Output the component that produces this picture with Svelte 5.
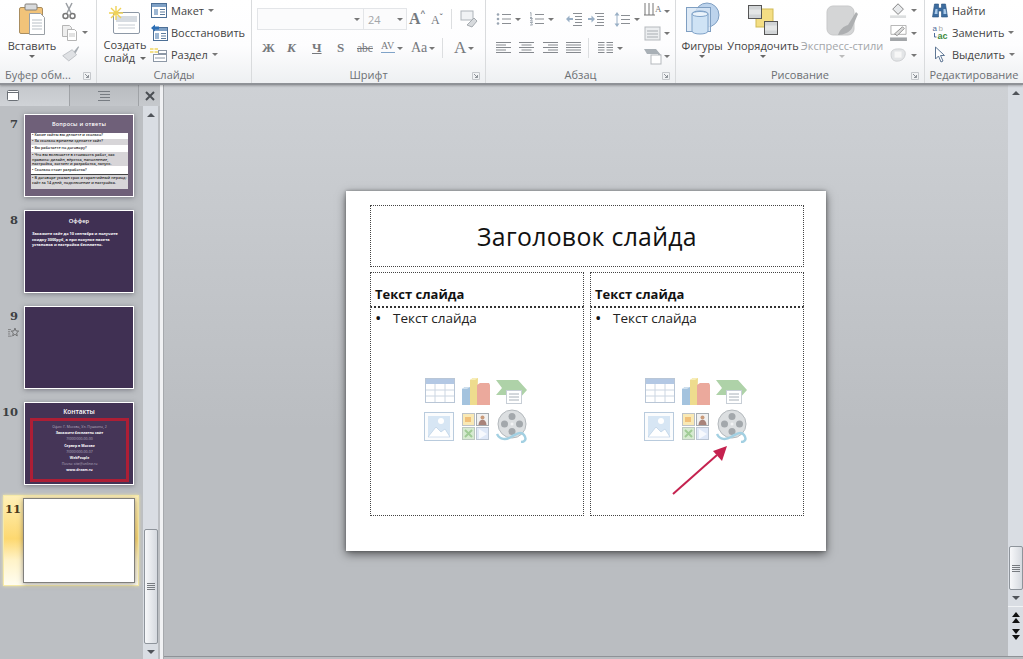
<script>
  const rows7 = [
    { t: 'Какие сайты вы делаете и сколько?', c: 'h6' },
    { t: 'За сколько времени сделаете сайт?', c: 'h6 alt' },
    { t: 'Вы работаете по договору?', c: 'h7' },
    { t: 'Что вы включаете в стоимость работ, как правило: дизайн, вёрстка, наполнение, настройка, хостинг и разработка, запуск.', c: 'h14 alt' },
    { t: 'Сколько стоит разработка?', c: 'h9 line' },
    { t: 'В договоре указан срок и гарантийный период: сайт за 14 дней, подключение и настройка.', c: 'h13 alt' }
  ];
</script>

{#snippet caret(cls = '')}<i class="caret {cls}"></i>{/snippet}
{#snippet launcher()}<svg class="launch" width="8" height="8" viewBox="0 0 8 8"><path d="M.5.5h7v7h-7z" fill="none" stroke="#c5c8cc"/><path d="M2 2l3.500 3.500M5.500 3v2.500H3" fill="none" stroke="#8d9298"/></svg>{/snippet}
{#snippet listIcon(kind)}
  <svg width="15" height="14" viewBox="0 0 15 14">
    {#if kind === 'bullet'}
      <path d="M6 2.500h9M6 7h9M6 11.500h9" stroke="#8b8f94"/>
      <circle cx="2" cy="2.500" r="1.300" fill="#9aa5b2"/><circle cx="2" cy="7" r="1.300" fill="#9aa5b2"/><circle cx="2" cy="11.500" r="1.300" fill="#9aa5b2"/>
    {:else}
      <path d="M6 2.500h9M6 7h9M6 11.500h9" stroke="#8b8f94"/>
      <path d="M1 1l1-.5v4M1 5.500h2M1 6.500h2.500l-2 2.500h2.500M1 10.500h2.500l-1 1.200 1 1.300H1" fill="none" stroke="#8a94a0" stroke-width=".8"/>
    {/if}
  </svg>
{/snippet}
{#snippet indentIcon(dir)}
  <svg width="16" height="14" viewBox="0 0 16 14">
    <path d="M7 1.500h9M9 4.500h7M9 7.500h7M9 10.500h7M7 13.500h9" stroke="#8b8f94"/>
    {#if dir === 'l'}<path d="M0 7l3.500-3.500V6H7v2H3.500v2.500z" fill="#9ab0c6"/>{:else}<path d="M7 7L3.500 3.500V6H0v2h3.500v2.500z" fill="#9ab0c6"/>{/if}
  </svg>
{/snippet}
{#snippet spacingIcon()}
  <svg width="16" height="15" viewBox="0 0 16 15">
    <path d="M7 3.500h9M7 7.500h9M7 11.500h9" stroke="#8b8f94"/>
    <path d="M3 0l2.500 3.500h-5zM3 15l2.500-3.500h-5z" fill="#9ab0c6"/><path d="M3 3v9" stroke="#9ab0c6"/>
  </svg>
{/snippet}
{#snippet alignIcon(mode)}
  <svg width="15" height="12" viewBox="0 0 15 12">
    {#each [0, 1, 2, 3, 4] as i}
      {@const long = i % 2 === 0 || mode === 'j'}
      {@const w = long ? 15 : 10}
      {@const x = mode === 'c' ? (15 - w) / 2 : mode === 'r' ? 15 - w : 0}
      <rect x={x} y={i * 2.500} width={w} height="1" fill="#85898e"/>
    {/each}
  </svg>
{/snippet}
{#snippet colsIcon()}
  <svg width="15" height="12" viewBox="0 0 15 12">
    {#each [0, 1, 2, 3, 4] as i}<rect x="0" y={i * 2.500} width="6.500" height="1" fill="#85898e"/><rect x="8.500" y={i * 2.500} width="6.500" height="1" fill="#85898e"/>{/each}
  </svg>
{/snippet}

{#snippet contentIcons()}
  <svg class="cicons" width="104" height="66" viewBox="0 0 104 66">
    <rect x="1.500" y="1.500" width="29" height="24" fill="#fff" stroke="#b9c6d6"/><rect x="2" y="2" width="28" height="5" fill="#b3c8e4"/>
    <path d="M11 7v18M21 7v18M2 13h28M2 19h28" stroke="#ccd6e2"/>
    <path d="M38 12l3-2h5v18h-8z" fill="#a4c3de"/><path d="M46 3l3-2h5l-1 27h-7z" fill="#eedc8e"/><path d="M46 3h5l3-2h-5z" fill="#f7edb8"/><path d="M53 8l3-2h9l1 2v20H53z" fill="#eba99c"/><path d="M38 12h5l3-2h-5z" fill="#cfe0ee"/>
    <path d="M72 3h22l9 10-8 9H85v-4H72l6-7z" fill="#aed2a8"/><rect x="82.500" y="13.500" width="15" height="13" fill="#fff" stroke="#c7ced6"/><path d="M85 17h10M85 20h10M85 23h10" stroke="#a8b0b8"/>
    <rect x=".5" y="35.500" width="29" height="28" fill="#fbfcfd" stroke="#b9cbdd"/><rect x="4" y="39" width="22" height="21" fill="#d7e6f4"/><path d="M4 60l8-10 5 5 4-3 5 8z" fill="#fff" stroke="#a9c3dc" stroke-width=".5"/><circle cx="17" cy="44" r="3" fill="#fff"/>
    <rect x="38.500" y="36.500" width="12" height="12" fill="#f9e9b5" stroke="#bcc2c8"/><rect x="41" y="40" width="6" height="5" fill="#f1c07a"/>
    <rect x="52.500" y="36.500" width="12" height="12" fill="#f0f0f0" stroke="#a5abb0"/><circle cx="58.500" cy="40.500" r="2" fill="#c99a7a"/><path d="M54.500 48c0-7 8-7 8 0z" fill="#a8837a"/>
    <rect x="38.500" y="50.500" width="12" height="12" fill="#d6ead1" stroke="#bcc8c0"/><path d="M41 53l7 7M48 53l-7 7" stroke="#a0cc96" stroke-width="2"/>
    <rect x="52.500" y="50.500" width="12" height="12" fill="#dfe8f7" stroke="#bcc6d4"/><path d="M55 52l8 5-8 5z" fill="#f7f9fd"/>
    <circle cx="88" cy="47" r="14" fill="#dcdfe1" stroke="#b4b9bd"/><circle cx="88" cy="39.500" r="3.500" fill="#a3a8ac"/><circle cx="80.500" cy="47" r="3.500" fill="#a3a8ac"/><circle cx="95.500" cy="47" r="3.500" fill="#a3a8ac"/><circle cx="88" cy="54.500" r="3.500" fill="#a3a8ac"/><circle cx="88" cy="47" r="1.500" fill="#f2f3f4"/>
    <path d="M73 57c3 6 9 6 14 3s10-6 13-2 1 7-3 7" fill="none" stroke="#a3d0e2" stroke-width="2.500"/>
  </svg>
{/snippet}

<div class="app">
  <header class="ribbon">
    <section class="group g1">
      <div class="content">
        <div class="big w64">
          <svg width="30" height="34" viewBox="0 0 30 34"><rect x="2.500" y="5.500" width="23" height="26" rx="1.500" fill="#f2c379" stroke="#a98d5f"/><rect x="8" y="2" width="12" height="6" rx="1" fill="#d8dadc" stroke="#84807a"/><path d="M12.500 11.500h11l4 4v17h-15z" fill="#fff" stroke="#9aa0a6"/><path d="M15 18h10M15 21h10M15 24h10M15 27h10" stroke="#b8bfc6"/></svg>
          <span class="t">Вставить</span>
          {@render caret()}
        </div>
        <div class="smallcol">
          <svg width="16" height="18" viewBox="0 0 16 18"><path d="M5 1l5 10M11 1L6 11" stroke="#9b9fa4" stroke-width="1.500"/><circle cx="4.500" cy="14" r="2.500" fill="none" stroke="#777" stroke-width="1.500"/><circle cx="11.500" cy="14" r="2.500" fill="none" stroke="#777" stroke-width="1.500"/></svg>
          <div class="row"><svg width="17" height="17" viewBox="0 0 17 17"><path d="M1.500 1.500h7l2 2v9h-9z" fill="#eee" stroke="#b5b5b5"/><path d="M6.500 5.500h7l2 2v9h-9z" fill="#fff" stroke="#b5b5b5"/><path d="M8 10h6M8 12h6" stroke="#c5c5c5"/></svg>{@render caret('mini')}</div>
          <svg width="19" height="18" viewBox="0 0 22 20"><path d="M2 12L13 5l5 6-9 7z" fill="#dfe1e4" stroke="#b8bcc0"/><path d="M15 7l5-6 1 1-4 7z" fill="#a6acb2"/></svg>
        </div>
      </div>
      <footer class="label"><span class="lab-name left">Буфер обм...</span>{@render launcher()}</footer>
    </section>

    <section class="group g2">
      <div class="content">
        <div class="big w62">
          <svg width="32" height="30" viewBox="0 0 32 30"><rect x="4.500" y="7.500" width="26" height="21" rx="1.500" fill="#fff" stroke="#8d98a6"/><rect x="7" y="11" width="21" height="6" fill="#d7dce2"/><path d="M9 20h17M9 23h17" stroke="#c6ccd3"/><path d="M7 1v14M0 8h14M2 3l10 10M12 3L2 13" stroke="#f0d256" stroke-width="1.400"/></svg>
          <span class="t two">Создать</span>
          <span class="t two">слайд {@render caret('inl')}</span>
        </div>
        <div class="listcol lc2">
          <div class="li"><svg width="18" height="15" viewBox="-1 0 18 15"><rect x=".5" y=".5" width="15" height="14" fill="#fff" stroke="#4c6f96"/><rect x="1" y="1" width="14" height="3" fill="#7fa1c6"/><rect x="3" y="6" width="4" height="6" fill="#9db7d3"/><path d="M9 6.500h5M9 9h5M9 11.500h5" stroke="#5d7c9e"/></svg><span>Макет</span>{@render caret('mini')}</div>
          <div class="li"><svg width="18" height="17" viewBox="0 0 18 17"><rect x="3.500" y="3.500" width="14" height="13" fill="#fff" stroke="#4c6f96"/><rect x="4" y="4" width="13" height="3" fill="#7fa1c6"/><rect x="5" y="9" width="4" height="6" fill="#9db7d3"/><path d="M11 9.500h5M11 12h5M11 14.500h5" stroke="#5d7c9e"/><path d="M1 4l4-3.500v2h4v3H5v2z" fill="#2d6fb5"/></svg><span>Восстановить</span></div>
          <div class="li"><svg width="18" height="17" viewBox="0 0 18 17"><path d="M0 2h8v5H0z" fill="#f3e08a"/><path d="M0 4.500h8M4 1v7" stroke="#fff"/><rect x="3.500" y="8.500" width="13" height="7" fill="#fff" stroke="#8d98a6"/><path d="M5 12h10" stroke="#8d98a6"/><rect x="8.500" y="4.500" width="8" height="3" fill="#fff" stroke="#8d98a6"/></svg><span>Раздел</span>{@render caret('mini')}</div>
        </div>
      </div>
      <footer class="label"><span class="lab-name">Слайды</span></footer>
    </section>

    <section class="group g3">
      <div class="content fontc">
        <div class="row r1">
          <div class="combo"><div class="cf">{@render caret('mini')}</div><div class="cs"><span>24</span>{@render caret('mini')}</div></div>
          <span class="aa big-a">A<sup>^</sup></span>
          <span class="aa small-a">A<sup>ˇ</sup></span>
          <i class="sep"></i>
          <svg width="18" height="18" viewBox="0 0 18 18"><rect x="1" y="1" width="12" height="9" fill="#f0f2f4" stroke="#aeb4ba"/><path d="M7 15l7-7 3 3-5 6z" fill="#d7dadd" stroke="#a6abb0"/></svg>
        </div>
        <div class="row r2">
          <b class="fb">Ж</b><b class="fb it">К</b><b class="fb un">Ч</b><b class="fb fs">S</b>
          <span class="fb strike">abc</span>
          <span class="fb av">AV<i class="dbl"></i></span>{@render caret('mini')}
          <span class="fb aac">Aa</span>{@render caret('mini')}
          <i class="sep s2"></i>
          <span class="fb ca">A</span>{@render caret('mini')}
        </div>
      </div>
      <footer class="label"><span class="lab-name">Шрифт</span>{@render launcher()}</footer>
    </section>

    <section class="group g4">
      <div class="content parac">
        <div class="paral">
          <div class="row pr1">
            <div class="row c33">{@render listIcon('bullet')}{@render caret('mini')}</div>
            <div class="row c37">{@render listIcon('num')}{@render caret('mini')}</div>
            <div class="row c22">{@render indentIcon('l')}</div>
            <div class="row c26">{@render indentIcon('r')}</div>
            <div class="row">{@render spacingIcon()}{@render caret('mini')}</div>
          </div>
          <div class="row pr2">
            <div class="c23">{@render alignIcon('l')}</div>
            <div class="c24">{@render alignIcon('c')}</div>
            <div class="c23">{@render alignIcon('r')}</div>
            <div class="c22">{@render alignIcon('j')}</div>
            <i class="sep s3"></i>
            {@render colsIcon()}{@render caret('mini')}
          </div>
        </div>
        <div class="parar">
          <div class="row"><svg width="18" height="16" viewBox="0 0 18 16"><path d="M1 0v12M5 0v12M9 0v12M-1 12h4M3 12h4M7 12h4" stroke="#777"/><text x="11" y="9" font-size="9" font-family="Liberation Serif" fill="#777">A</text></svg>{@render caret('mini')}</div>
          <div class="row"><svg width="18" height="17" viewBox="0 0 18 17"><rect x="1" y="2" width="15" height="13" fill="#eceef0" stroke="#b5b9bd"/><path d="M3 6h11M3 9h11M3 12h11" stroke="#a8adb2"/></svg>{@render caret('mini')}</div>
          <div class="row"><svg width="18" height="17" viewBox="0 0 18 17"><path d="M0 1h12l5 6-3 3V6H3z" fill="#a9b0b6"/><rect x="7" y="7" width="10" height="9" fill="#fff" stroke="#b5b9bd"/></svg>{@render caret('mini')}</div>
        </div>
      </div>
      <footer class="label"><span class="lab-name">Абзац</span>{@render launcher()}</footer>
    </section>

    <section class="group g5">
      <div class="content">
        <div class="big w46">
          <svg width="36" height="34" viewBox="0 0 36 34"><circle cx="23" cy="13" r="12" fill="#bcd3ec" stroke="#7f9fc2"/><rect x="2.500" y="5.500" width="24" height="24" fill="#d6e5f4" fill-opacity=".8" stroke="#7f9fc2"/><path d="M8 12c0-4 16-4 16 0v17c0 4-16 4-16 0z" fill="#cfe3f5" stroke="#7fa2c8"/><ellipse cx="16" cy="12" rx="8" ry="2.500" fill="#eaf3fb" stroke="#7fa2c8"/></svg>
          <span class="t">Фигуры</span>
          {@render caret()}
        </div>
        <div class="big w78">
          <svg width="32" height="34" viewBox="0 0 32 34"><rect x="9" y="7" width="17" height="18" fill="#f4de84" stroke="#cfb955"/><rect x="1.500" y="3.500" width="13" height="13" fill="#d1d4d6" stroke="#555"/><rect x="17.500" y="19.500" width="13" height="13" fill="#d1d4d6" stroke="#555"/><path d="M2 10h12M18 26h12" stroke="#f2f2f2" stroke-width="5" opacity=".6"/></svg>
          <span class="t">Упорядочить</span>
          {@render caret()}
        </div>
        <div class="big w82 dim">
          <svg width="32" height="34" viewBox="0 0 32 34"><rect x="1" y="4" width="27" height="29" rx="6" fill="#d4d5d6" stroke="#c8c9ca"/><path d="M12 33c2-6 6-9 10-10l8-13 2 2-6 14c-2 4-8 7-14 7z" fill="#adafb1"/></svg>
          <span class="t">Экспресс-стили</span>
          {@render caret()}
        </div>
        <div class="smallcol sc5">
          <div class="row"><svg width="17" height="16" viewBox="0 0 19 18"><path d="M3 8l6-6 6 6-6 6z" fill="#e8eaec" stroke="#777"/><path d="M0 15h18v3H0z" fill="#dcdedf"/></svg>{@render caret('mini')}</div>
          <div class="row"><svg width="17" height="16" viewBox="0 0 19 18"><path d="M1 .5h17v10H1z" fill="#fff" stroke="#aaa"/><path d="M5 10L14 2l2 2-8 8z" fill="#ddd" stroke="#888"/><path d="M0 14h19v4H0z" fill="#a3a6a9"/></svg>{@render caret('mini')}</div>
          <div class="row"><svg width="17" height="14" viewBox="0 0 19 16"><path d="M1 7c0-5 4-6 9-6 6 0 8 3 7 7-1 5-5 7-9 7-5 0-7-3-7-8z" fill="#e3e5e7" stroke="#c9ccce"/><path d="M5 4h8v7H5z" fill="#f7f7f7"/></svg>{@render caret('mini')}</div>
        </div>
      </div>
      <footer class="label"><span class="lab-name">Рисование</span>{@render launcher()}</footer>
    </section>

    <section class="group g6">
      <div class="content">
        <div class="listcol lc6">
          <div class="li"><svg width="17" height="15" viewBox="0 0 17 15"><path d="M3 1h4v4h3V1h4l2 13h-6V8H7v6H1z" fill="#3d6da0" stroke="#29507c" stroke-width=".6"/><path d="M4 6h2v5H3zM12 6h2l1 5h-3z" fill="#a9c9e8"/></svg><span>Найти</span></div>
          <div class="li"><svg width="17" height="17" viewBox="0 0 17 17"><text x="1" y="7" font-size="8" font-family="Liberation Sans" fill="#4d6b9a">a</text><text x="7" y="7" font-size="8" font-family="Liberation Sans" fill="#aaa">b</text><text x="6" y="15" font-size="9" font-weight="700" font-family="Liberation Sans" fill="#3f8a3f">ac</text><path d="M3 9v4h2" fill="none" stroke="#4d6b9a"/></svg><span>Заменить</span>{@render caret('mini')}</div>
          <div class="li"><svg width="17" height="17" viewBox="0 0 17 17"><path d="M4 1v12l3-3 2.500 6 2-1-2.500-5.500h4z" fill="#fff" stroke="#5e7694"/></svg><span>Выделить</span>{@render caret('mini')}</div>
        </div>
      </div>
      <footer class="label"><span class="lab-name">Редактирование</span></footer>
    </section>
  </header>

  <div class="work">
    <aside class="side">
      <div class="tabs">
        <div class="tab t-a"><svg width="12" height="11" viewBox="0 0 12 11"><rect x=".5" y=".5" width="11" height="10" rx="1" fill="#fff" stroke="#6b7076"/><path d="M1 2.500h10" stroke="#6b7076"/></svg></div>
        <div class="tab t-b"><svg width="14" height="10" viewBox="0 0 14 10"><path d="M1 .5h12M3 3.500h10M3 6.500h10M1 9.500h12" stroke="#777c82"/></svg></div>
        <div class="tab t-c"><svg width="10" height="10" viewBox="0 0 10 10"><path d="M1 1l8 8M9 1L1 9" stroke="#4a4e53" stroke-width="2"/></svg></div>
      </div>
      <div class="sidebody">
        <div class="thumbs">
          <div class="item">
            <div class="num">7</div>
            <div class="thumb s7">
              <div class="th-title t7">Вопросы и ответы</div>
              <div class="rows7">
                {#each rows7 as r}<div class="r7 {r.c}">• {r.t}</div>{/each}
              </div>
            </div>
          </div>
          <div class="item">
            <div class="num">8</div>
            <div class="thumb dark">
              <div class="th-title t8">Оффер</div>
              <p class="p8">Закажите сайт до 10 сентября и получите скидку 3000руб, а при покупке пакета установка и настройка бесплатно.</p>
            </div>
          </div>
          <div class="item">
            <div class="num">9<svg class="star" width="11" height="11" viewBox="0 0 15 14"><path d="M0 3h4M0 6h3M0 9h3M0 12h5" stroke="#6a6a6a"/><path d="M9.500 1l1.400 3.800 3.600.3-2.700 2.500.8 4-3.100-2.100-3.100 2.100.8-4L4.500 5.100l3.600-.3z" fill="none" stroke="#555"/></svg></div>
            <div class="thumb dark"></div>
          </div>
          <div class="item">
            <div class="num">10</div>
            <div class="thumb dark s10">
              <div class="th-title t10">Контакты</div>
              <div class="redbox">
                <span>Офис: Г. Москва, Ул. Пушкина, 2</span>
                <span class="w">Закажите бесплатно сайт</span>
                <span>7(000)000-00-00</span>
                <span class="w">Сервер в Москве</span>
                <span>7(000)000-00-07</span>
                <span class="w">WebPeople</span>
                <span>Почта: site@online.ru</span>
                <span class="w">www.dream.ru</span>
              </div>
            </div>
          </div>
          <div class="item sel">
            <div class="num">11</div>
            <div class="thumb blank"></div>
          </div>
        </div>
        <div class="vscroll vs1">
          <div class="arr up"></div>
          <div class="spacer"></div>
          <div class="sthumb st1"><span class="grip"></span></div>
          <div class="arr down a15"></div>
        </div>
      </div>
    </aside>

    <main class="main">
      <div class="stage">
        <div class="slide">
          <div class="ph title">Заголовок слайда</div>
          <div class="cols">
            <div class="col">
              <div class="ph head">Текст слайда</div>
              <div class="ph body">
                <div class="bul"><span>•</span>Текст слайда</div>
                {@render contentIcons()}
              </div>
            </div>
            <div class="col">
              <div class="ph head">Текст слайда</div>
              <div class="ph body">
                <div class="bul"><span>•</span>Текст слайда</div>
                {@render contentIcons()}
                <svg class="arrow" width="60" height="56" viewBox="0 0 60 56"><path d="M2 54L46 15" stroke="#c5224f" stroke-width="2"/><path d="M56 6L42 11l9 10z" fill="#c5224f"/></svg>
              </div>
            </div>
          </div>
        </div>
      </div>
      <div class="vscroll vs2">
        <div class="arr up"></div>
        <div class="spacer"></div>
        <div class="sthumb st2"><span class="grip"></span></div>
        <div class="arr down"></div>
        <div class="pager">
          <div class="dblarr"><i class="tu"></i><i class="tu"></i></div>
          <div class="dblarr"><i class="td"></i><i class="td"></i></div>
        </div>
      </div>
    </main>
  </div>
</div>

<style>
  :global(body) { margin: 0; background: #bdc0c4; }
  .app { width: 1023px; height: 659px; overflow: hidden; display: flex; flex-direction: column; font-family: "Open Sans", "Noto Sans", sans-serif; color: #444; }
  .ribbon { height: 83px; flex: none; display: flex; background: linear-gradient(#fff 0%, #fdfdfe 55%, #eef0f2 100%); border-bottom: 2px solid #8f9297; box-shadow: 0 1px 2px rgba(0,0,0,.25); position: relative; z-index: 2; }
  .group { display: flex; flex-direction: column; border-right: 1px solid #d9dbdd; flex: none; box-sizing: border-box; }
  .g1 { width: 97px; } .g2 { width: 155px; } .g3 { width: 234px; } .g4 { width: 190px; } .g5 { width: 249px; } .g6 { width: 98px; border-right: 0; }
  .content { flex: 1; display: flex; min-height: 0; }
  .label { height: 16px; flex: none; display: flex; align-items: center; justify-content: center; position: relative; font-size: 11px; color: #6c6f73; line-height: 16px; }
  .lab-name.left { position: absolute; left: 5px; }
  .launch { position: absolute; right: 5px; top: 5px; }
  .row { display: flex; align-items: center; }
  .caret { display: inline-block; width: 0; height: 0; border: 3px solid transparent; border-top: 3.500px solid #666; border-bottom: 0; margin-top: 3px; }
  .caret.mini { margin: 0 0 0 4px; border-top-color: #777; }
  .caret.inl { margin: 0 0 2px 2px; vertical-align: middle; }
  .big { display: flex; flex-direction: column; align-items: center; flex: none; padding-top: 2px; font-size: 11px; line-height: 13px; }
  .big svg { height: 34px; flex: none; margin-bottom: 3px; }
  .big .t { white-space: nowrap; }
  .w64 { width: 64px; }
  .w62 { width: 56px; padding-top: 3px; }
  .w62 svg { margin-bottom: 1px; }
  .w46 { width: 52px; }
  .w78 { width: 70px; }
  .w82 { width: 88px; }
  .dim { color: #a3a6a9; }
  .dim .caret { border-top-color: #bbb; }
  .smallcol { display: flex; flex-direction: column; align-items: flex-start; gap: 4px; padding: 2px 0 0 0; margin-left: -3px; }
  .sc5 { gap: 7px; padding-top: 2px; margin-left: 4px; }
  .listcol { display: flex; flex-direction: column; gap: 5px; padding: 2px 0 0 0; }
  .lc2 { margin-left: -3px; }
  .li { display: flex; align-items: center; height: 17px; font-size: 11px; white-space: nowrap; }
  .li svg { width: 18px; flex: none; margin-right: 3px; }
  .lc6 { padding-left: 6px; }
  .fontc { flex-direction: column; padding: 8px 0 0 5px; gap: 8px; }
  .combo { display: flex; width: 150px; height: 22px; box-sizing: border-box; border: 1px solid #e3e5e8; background: #fbfbfc; flex: none; }
  .cf { width: 106px; display: flex; justify-content: flex-end; align-items: center; padding-right: 3px; border-right: 1px solid #e3e5e8; box-sizing: border-box; }
  .cs { flex: 1; display: flex; align-items: center; justify-content: space-between; padding: 0 3px 0 4px; font-size: 11px; color: #a3a6a9; }
  .aa { font-family: "Liberation Serif", serif; color: #757a7f; font-weight: 700; display: inline-flex; }
  .aa sup { font: 700 8px "Liberation Sans", sans-serif; margin-top: -1px; }
  .big-a { font-size: 16px; margin-left: 2px; width: 22px; }
  .small-a { font-size: 12px; font-weight: 400; width: 20px; padding-top: 2px; }
  .sep { display: block; width: 1px; height: 20px; background: #dcdee0; margin-right: 8px; flex: none; }
  .r2 { height: 20px; padding-left: 5px; }
  .r2 .caret.mini { margin-left: 2px; }
  .fb { font-family: "Liberation Serif", serif; font-weight: 700; font-style: normal; color: #76797d; font-size: 13px; width: 25px; flex: none; }
  .it { font-style: italic; } .un { text-decoration: underline; }
  .fs { width: 20px; }
  .strike { text-decoration: line-through; font-weight: 400; font-size: 11.500px; width: 24px; }
  .av { font-size: 10px; font-weight: 400; width: 14px; position: relative; line-height: 10px; margin-top: -4px; }
  .dbl { position: absolute; left: 0; top: 11px; width: 14px; height: 0; border-top: 1px solid #7fa3c8; }
  .aac { font-size: 14px; font-weight: 400; width: 16px; margin-left: 8px; }
  .ca { font-size: 17px; width: 12px; font-weight: 400; }
  .s2 { margin: 0 11px 0 7px; }
  .parac { padding: 3px 0 0 10px; }
  .paral { width: 148px; display: flex; flex-direction: column; gap: 13px; padding-top: 8px; flex: none; }
  .pr1 { height: 16px; }
  .c33 { width: 33px; } .c37 { width: 37px; } .c22 { width: 22px; } .c26 { width: 26px; }
  .c23 { width: 23px; } .c24 { width: 24px; }
  .pr2 { height: 16px; }
  .pr2 > div { display: flex; align-items: center; }
  .s3 { height: 20px; margin: 0 9px 0 0; }
  .parar { display: flex; flex-direction: column; gap: 6px; }
  .parar .caret.mini { margin-left: 2px; }
  .work { flex: 1; display: flex; min-height: 0; background: linear-gradient(#ced1d5, #babdc1 60%); }
  .side { width: 160px; flex: none; display: flex; flex-direction: column; border-right: 3px solid #f1f2f4; box-shadow: 1px 0 0 #a6a9ad; }
  .tabs { height: 21px; display: flex; flex: none; }
  .tab { display: flex; align-items: center; justify-content: center; box-sizing: border-box; }
  .t-a { width: 69px; background: linear-gradient(#c4c7cb, #d0d3d7); justify-content: flex-start; padding-left: 7px; }
  .t-b { width: 70px; background: linear-gradient(#b9bcc0, #c3c6ca); border-left: 1px solid #9fa2a6; border-right: 1px solid #9fa2a6; }
  .t-c { width: 21px; background: linear-gradient(#bcbfc3, #c6c9cd); }
  .sidebody { flex: 1; display: flex; min-height: 0; background: #bcbfc3; }
  .thumbs { width: 143px; flex: none; box-sizing: border-box; padding-top: 8px; display: flex; flex-direction: column; gap: 13px; }
  .item { display: flex; height: 83px; flex: none; }
  .num { width: 24px; flex: none; box-sizing: border-box; padding: 3px 6px 0 0; font: 700 11.500px/14px "DejaVu Serif", serif; color: #3d3f42; display: flex; flex-direction: column; align-items: flex-end; }
  .num .star { margin: 4px -1px 0 0; }
  .thumb { width: 110px; height: 83px; flex: none; box-sizing: border-box; border: 1px solid #fff; box-shadow: 0 1px 5px rgba(60,60,70,.5); overflow: hidden; color: #fff; text-align: center; position: relative; }
  .dark { background: #403053; }
  .s7 { background: #6f6079; }
  .th-title { font-size: 5.500px; line-height: 7px; padding-top: 6px; }
  .t7 { padding-top: 6px; font-weight: 600; letter-spacing: .2px; }
  .rows7 { margin: 5px 5px 0 6px; color: #222; font-size: 3.800px; line-height: 4.500px; text-align: left; font-weight: 600; }
  .r7 { background: #fff; padding-left: 1px; overflow: hidden; box-sizing: border-box; }
  .r7.alt { background: #d7d5d8; }
  .h6 { height: 6px; } .h7 { height: 7px; padding-top: 1px; } .h9 { height: 9px; padding-top: 2px; } .h13 { height: 14px; padding-top: 1px; } .h14 { height: 14px; padding-top: 1px; }
  .r7.line { border-bottom: 1px solid #444; }
  .t8 { padding-top: 7px; font-size: 5.800px; font-weight: 600; }
  .p8 { margin: 6px 9px 0 7px; font-size: 3.900px; line-height: 5.500px; text-align: left; font-weight: 700; }
  .t10 { padding-top: 5px; font-size: 6.500px; font-weight: 600; }
  .s10 { background: #433355; }
  .redbox { box-sizing: border-box; margin: 3px 4px 0 5px; height: 64px; border: 3.500px solid #ad1e35; display: flex; flex-direction: column; align-items: center; padding-top: 3px; font-size: 3.500px; line-height: 6.200px; color: #b7b0c0; background: #453557; white-space: nowrap; }
  .redbox .w { color: #fff; font-weight: 700; }
  .sel { margin-top: -3px; height: 91px; margin-left: 3px; width: 136px; box-sizing: border-box; border: 1px solid #f6eaa8; background: linear-gradient(#fff0b8, #fdd870 48%, #fff3c8 72%, #fffdf0 100%); box-shadow: 0 0 3px #f5e9a8; padding-top: 2px; }
  .sel .num { width: 19px; padding: 4px 2px 0 0; color: #4a3a1c; }
  .blank { background: #fff; border: 1px solid #807f7c; width: 112px; height: 85px; }
  .vscroll { width: 15px; flex: none; background: #d9dde3; display: flex; flex-direction: column; align-items: center; box-sizing: border-box; }
  .arr { height: 17px; width: 100%; flex: none; display: flex; align-items: center; justify-content: center; }
  .a15 { height: 15px; }
  .arr::after { content: ""; border: 4.500px solid transparent; }
  .arr.up::after { border-top: 0; border-bottom: 4.500px solid #50545a; }
  .arr.down::after { border-bottom: 0; border-top: 4.500px solid #50545a; }
  .spacer { flex: 1; }
  .sthumb { width: 14px; box-sizing: border-box; border: 1px solid #8e949b; border-radius: 2px; background: linear-gradient(90deg, #f7f8fa, #d5d9df); display: flex; align-items: center; justify-content: center; flex: none; }
  .st1 { height: 115px; }
  .st2 { height: 44px; }
  .grip { display: block; width: 8px; height: 7px; background: repeating-linear-gradient(#777b80 0 1px, transparent 1px 2px); }
  .main { flex: 1; display: flex; min-width: 0; margin-left: 1px; margin-bottom: 2px; border-bottom: 1px solid #8f9297; }
  .stage { flex: 1; display: flex; justify-content: center; padding-top: 106px; box-sizing: border-box; }
  .slide { width: 480px; height: 360px; flex: none; box-sizing: border-box; background: #fff; padding: 14px 22px 0 24px; box-shadow: 0 3px 9px rgba(0,0,0,.55), 0 0 3px rgba(0,0,0,.3); display: flex; flex-direction: column; gap: 5px; color: #111; }
  .ph { border: 1px dotted #444; box-sizing: border-box; }
  .title { height: 62px; display: flex; align-items: center; justify-content: center; font-size: 24.800px; letter-spacing: .3px; padding-bottom: 1px; }
  .cols { display: flex; gap: 6px; }
  .col { width: 214px; display: flex; flex-direction: column; }
  .head { height: 34px; font-weight: 700; font-size: 13px; padding: 12px 0 0 4px; line-height: 18px; border-bottom: 0; }
  .body { height: 210px; position: relative; display: flex; flex-direction: column; align-items: center; border-top: 2px dotted #333; }
  .bul { align-self: stretch; font-size: 13.500px; line-height: 18px; padding: 1px 0 0 4px; display: flex; color: #222; }
  .bul span { width: 18px; flex: none; font-size: 17px; color: #111; }
  .cicons { margin: 50px 2px 0 0; }
  .arrow { position: absolute; left: 80px; top: 132px; }
  .vs2 .arr { height: 16px; }
  .pager { height: 50px; flex: none; width: 100%; border-top: 1px solid #f1f3f5; display: flex; flex-direction: column; align-items: center; padding-top: 5px; gap: 5px; box-sizing: border-box; }
  .dblarr { display: flex; flex-direction: column; align-items: center; }
  .tu, .td { display: block; border: 4.500px solid transparent; }
  .tu { border-top: 0; border-bottom: 5px solid #111; margin-bottom: 1px; }
  .td { border-bottom: 0; border-top: 5px solid #111; margin-bottom: 1px; }
</style>
